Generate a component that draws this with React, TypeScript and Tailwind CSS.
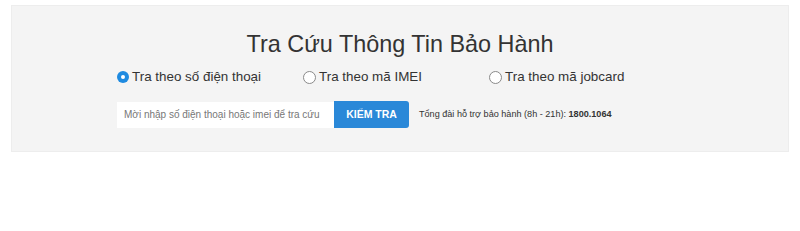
import { useState } from 'react';

const options = [
  { id: 'phone', label: 'Tra theo số điện thoại' },
  { id: 'imei', label: 'Tra theo mã IMEI' },
  { id: 'jobcard', label: 'Tra theo mã jobcard' },
];

export default function App() {
  const [mode, setMode] = useState('phone');
  const [value, setValue] = useState('');

  return (
    <div className="w-[800px] h-[231px] bg-white pt-[5px] px-[11px] font-['Liberation_Sans',Arial,sans-serif] text-[#333]">
      <section className="h-[147px] bg-[#f4f4f4] border border-[#ededed]">
        <h1 className="text-center text-[23.4px] leading-[28px] mt-[24px] text-[#333]">
          Tra Cứu Thông Tin Bảo Hành
        </h1>

        <div className="w-[558px] mx-[105px] mt-[11px] grid grid-cols-3">
          {options.map((o) => (
            <label key={o.id} className="flex items-center gap-[3px] cursor-pointer text-[13.4px] leading-[16px]">
              <input
                type="radio"
                name="mode"
                checked={mode === o.id}
                onChange={() => setMode(o.id)}
                className="sr-only"
              />
              {mode === o.id ? (
                <span className="w-[12px] h-[12px] rounded-full bg-[#1e8ae0] flex items-center justify-center">
                  <span className="w-[4px] h-[4px] rounded-full bg-white" />
                </span>
              ) : (
                <span className="w-[13px] h-[13px] rounded-full border border-[#8a8a8a] bg-white" />
              )}
              <span>{o.label}</span>
            </label>
          ))}
        </div>

        <div className="mx-[105px] mt-[16px] flex items-center">
          <input
            value={value}
            onChange={(e) => setValue(e.target.value)}
            placeholder="Mời nhập số điện thoại hoặc imei để tra cứu"
            className="w-[217px] h-[26px] bg-white px-[7px] text-[10px] text-[#333] placeholder-[#777] outline-none"
          />
          <button className="w-[75px] h-[27px] rounded-r-[3px] bg-[#2a88d8] text-white text-[10.5px] font-bold">
            KIỂM TRA
          </button>
          <p className="ml-[10px] text-[9.1px] text-[#333]">
            Tổng đài hỗ trợ bảo hành (8h - 21h): <b>1800.1064</b>
          </p>
        </div>
      </section>
    </div>
  );
}
